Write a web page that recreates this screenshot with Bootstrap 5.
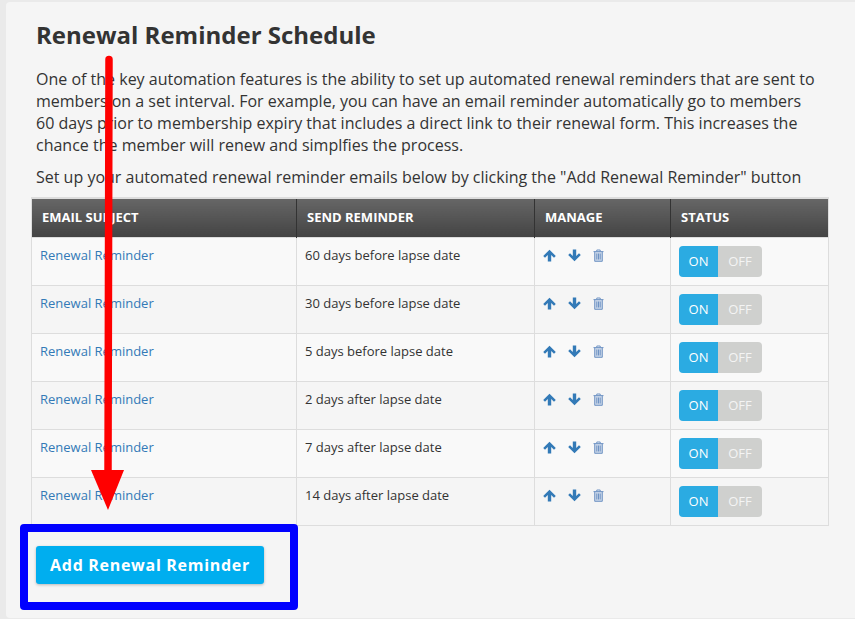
<!DOCTYPE html>
<html lang="en">
<head>
<meta charset="utf-8">
<title>Renewal Reminder Schedule</title>
<link href="https://cdn.jsdelivr.net/npm/bootstrap@5.3.0/dist/css/bootstrap.min.css" rel="stylesheet">
<style>
html,body{height:619px;overflow:hidden}
body{background:#eaeaea;font-family:"Open Sans",sans-serif;color:#333;position:relative}
.sheet{background:#f5f5f5;margin:2px 0 0 6px;height:616px;border-radius:4px 0 0 4px;padding:18px 27px 0 30px}
.sheet h1{font-size:24px;font-weight:700;line-height:30px;margin:0 0 18px;color:#333}
.sheet p{font-size:16px;line-height:22px;margin:0 0 10px;max-width:785px}
.sheet p.lead-out{max-width:none;margin-bottom:9px}
.rem-table{width:797px;margin:0 0 0 -5px;table-layout:fixed;border-collapse:collapse;--bs-table-bg:transparent;font-size:13px;color:#333}
.rem-table>:not(caption)>*>*{padding:0;border:1px solid #ddd;background:transparent;box-shadow:none;color:#333}
.rem-table thead th{height:39px;background:linear-gradient(#666,#444);color:#fff;font-size:13px;font-weight:700;text-transform:uppercase;padding:0 10px;border-color:#ddd #333 transparent;border-width:2px 1px 0;vertical-align:middle}
.rem-table thead th:first-child{border-left-color:#ddd}
.rem-table thead th:last-child{border-right-color:#ddd}
.rem-table tbody td{height:48px;padding:8px 8px;vertical-align:top;line-height:18px}
.rem-table tbody tr:nth-child(odd) td{background:#f9f9f9}
.rem-table a{color:#337ab7;text-decoration:none}
.tools{display:flex;align-items:center;gap:12px;height:18px;padding:1px 0 0}
.switcher{display:inline-flex;width:83px;height:31px;border-radius:4px;overflow:hidden;font-size:13px;line-height:31px;text-align:center}
.switcher span{display:block}
.sw-on{width:39px;background:#2babe2;color:#fff}
.sw-off{width:44px;background:#cfd0ce;color:#f4f4f4}
.rem-table td.stat{padding:8px 8px 0}
.add-btn{background:#00aeef;border:0;color:#fff;font-weight:700;font-size:16px;letter-spacing:.7px;width:228px;height:38px;border-radius:3px;box-shadow:0 1px 3px rgba(0,0,0,.25);padding:0;--bs-btn-hover-bg:#00aeef;--bs-btn-hover-color:#fff}
.btn-row{margin-top:20px}
.blue-box{position:absolute;left:20px;top:524px;width:278px;height:86px;border:8px solid #0000ff;border-radius:4px}
.red-arrow{position:absolute;left:0;top:0;width:855px;height:619px;pointer-events:none}
</style>
</head>
<body>
<div class="sheet">
  <h1>Renewal Reminder Schedule</h1>
  <p>One of the key automation features is the ability to set up automated renewal reminders that are sent to members on a set interval. For example, you can have an email reminder automatically go to members 60 days prior to membership expiry that includes a direct link to their renewal form. This increases the chance the member will renew and simplfies the process.</p>
  <p class="lead-out">Set up your automated renewal reminder emails below by clicking the "Add Renewal Reminder" button</p>
  <table class="table rem-table mb-0">
    <colgroup><col style="width:265px"><col style="width:238px"><col style="width:136px"><col style="width:158px"></colgroup>
    <thead><tr><th>Email Subject</th><th>Send Reminder</th><th>Manage</th><th>Status</th></tr></thead>
    <tbody id="rows"></tbody>
  </table>
  <div class="btn-row"><button type="button" class="btn add-btn">Add Renewal Reminder</button></div>
</div>
<div class="blue-box"></div>
<svg class="red-arrow" viewBox="0 0 855 619" aria-hidden="true">
  <line x1="109" y1="59.500" x2="108" y2="475" stroke="#f00" stroke-width="7.500" stroke-linecap="round"/>
  <polygon points="91,470 124,470 108,510" fill="#f00"/>
</svg>
<script>
var up='<svg width="13" height="13" viewBox="0 0 13 13"><path d="M6.500 .8 12.800 7 11 8.700 8.200 6v6.400H4.800V6L2 8.700.2 7Z" fill="#337ab7"/></svg>';
var down='<svg width="13" height="13" viewBox="0 0 13 13"><path d="M6.500 12.200.2 6 2 4.300 4.800 7V.6h3.400V7L11 4.300 12.800 6Z" fill="#337ab7"/></svg>';
var trash='<svg width="11" height="13" viewBox="0 0 11 13"><path d="M2 3h7v9.200H2Z" fill="#c9d6e8"/><path d="M.5 2.600h10M3.800 2.400V1h3.400v1.400M1.700 2.800v9.500h7.600V2.800M3.800 4.500v6M5.500 4.500v6M7.200 4.500v6" fill="none" stroke="#6f93c4" stroke-width="1"/></svg>';
var d=["60 days before lapse date","30 days before lapse date","5 days before lapse date","2 days after lapse date","7 days after lapse date","14 days after lapse date"];
document.getElementById('rows').innerHTML=d.map(function(t){return '<tr><td><a href="#">Renewal Reminder</a></td><td>'+t+'</td><td><div class="tools">'+up+down+trash+'</div></td><td class="stat"><div class="switcher"><span class="sw-on">ON</span><span class="sw-off">OFF</span></div></td></tr>';}).join('');
</script>
<script src="https://cdn.jsdelivr.net/npm/bootstrap@5.3.0/dist/js/bootstrap.bundle.min.js"></script>
</body>
</html>
